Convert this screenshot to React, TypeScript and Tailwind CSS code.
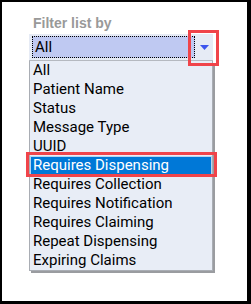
import { FunctionComponent } from "react";

const options = [
    "All",
    "Patient Name",
    "Status",
    "Message Type",
    "UUID",
    "Requires Dispensing",
    "Requires Collection",
    "Requires Notification",
    "Requires Claiming",
    "Repeat Dispensing",
    "Expiring Claims",
];

const highlighted = "Requires Dispensing";

const App: FunctionComponent = () => {
    return (
        <div className="w-[251px] h-[304px] bg-white border-black border-t-2 border-l-2 border-r-4 border-b-[3px] box-border pl-[27px] pt-[13px]">
            <div className="pl-1 text-[14px] leading-4 font-bold text-[#999999] font-['Liberation_Sans',Arial,sans-serif]">
                Filter list by
            </div>

            <div className="relative mt-[3px] w-[184px] font-['Roboto',sans-serif] text-[15px] text-black">
                {/* closed select */}
                <div className="flex h-[27px] bg-[#e6ebf5] border-b border-[#b5b9c0] pl-[3px] pt-[2px] pb-[2px]">
                    <div className="w-[163px] h-[22px] bg-[#bfc9f2] border border-dotted border-black leading-[20px] pl-[2px]">
                        All
                    </div>
                    <div className="flex-1 flex items-center justify-center">
                        <svg width="9" height="5" viewBox="0 0 9 5">
                            <polygon points="0,0 9,0 4.5,5" fill="#3d55ee" />
                        </svg>
                    </div>
                </div>
                <div className="absolute left-[159px] top-[-4px] w-[31px] h-[36px] border-[3px] border-[#f0444a]" />

                {/* open list */}
                <div className="border-l border-r border-b border-[#a9adb4] bg-[#e8edf6] shadow-[2px_2px_0_#9a9ca0]">
                    {options.map((opt) => (
                        <div
                            key={opt}
                            className={
                                opt === highlighted
                                    ? "relative h-[19px] leading-[19px] pl-[3px] bg-[#0078d7] text-white outline outline-1 -outline-offset-1 outline-[#b9d4ee]"
                                    : "h-[19px] leading-[19px] pl-[3px]"
                            }
                        >
                            {opt}
                            {opt === highlighted && (
                                <div className="absolute left-[-4px] right-[-5px] top-[-4px] bottom-[-2px] border-[3px] border-[#f0444a]" />
                            )}
                        </div>
                    ))}
                </div>
            </div>
        </div>
    );
};

export default App;
